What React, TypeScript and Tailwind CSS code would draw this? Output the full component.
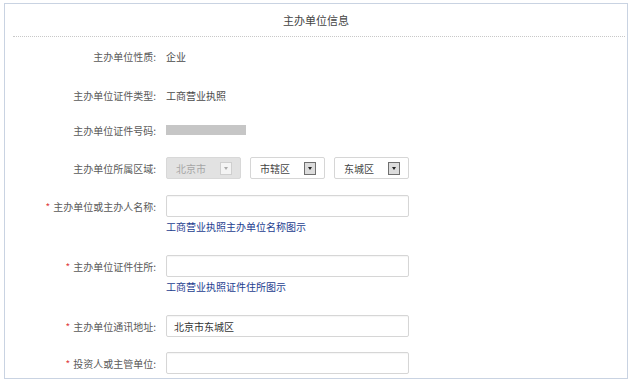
const font = { fontFamily: '"Noto Sans CJK SC", "Noto Sans", sans-serif' }

function Label({ text, required }: { text: string; required?: boolean }) {
  return (
    <div className="w-[151px] h-[22px] flex items-center justify-end shrink-0 text-[10px] text-[#5a5a5a]">
      {required && <span className="text-[#e04040] mr-[3px]">*</span>}
      <span>{text}:</span>
    </div>
  )
}

function TextInput({ value }: { value?: string }) {
  return (
    <div className="w-[243px] h-[22px] border border-[#d6d6d6] rounded-[2px] bg-white flex items-center px-[7px] text-[10px] text-[#333] shadow-[inset_0_1px_1px_rgba(0,0,0,0.04)]">
      {value}
    </div>
  )
}

function Select({ text, disabled }: { text: string; disabled?: boolean }) {
  return (
    <div
      className={`w-[75px] h-[22px] border rounded-[2px] flex items-center justify-between pl-[9px] pr-[8px] text-[10px] ${
        disabled ? 'bg-[#e2e2e2] border-[#d8d8d8] text-[#a5a5a5]' : 'bg-white border-[#d6d6d6] text-[#444]'
      }`}
    >
      <span>{text}</span>
      <span
        className={`w-[12px] h-[13px] border flex items-center justify-center ${
          disabled ? 'bg-[#f4f4f4] border-[#cfcfcf]' : 'bg-[#dcdcdc] border-[#6f6f6f]'
        }`}
      >
        <span
          className={`w-0 h-0 border-l-[2.5px] border-r-[2.5px] border-t-[3px] border-l-transparent border-r-transparent ${
            disabled ? 'border-t-[#aaa]' : 'border-t-[#222]'
          }`}
        />
      </span>
    </div>
  )
}

export default function App() {
  return (
    <div className="w-[632px] h-[383px] bg-white pt-[3px] pl-[4px]" style={font}>
      <div className="w-[624px] h-[376px] border border-[#c9d3e2] flex flex-col">
        <div className="h-[32px] flex items-center justify-center text-[11px] text-[#444]">主办单位信息</div>
        <div className="ml-[8px] mr-[2px] border-t border-dotted border-[#c8c8c8]" />

        <div className="flex items-center gap-[10px] mt-[8px]">
          <Label text="主办单位性质" />
          <span className="text-[10px] text-[#4a4a4a]">企业</span>
        </div>

        <div className="flex items-center gap-[10px] mt-[17px]">
          <Label text="主办单位证件类型" />
          <span className="text-[10px] text-[#4a4a4a]">工商营业执照</span>
        </div>

        <div className="flex items-center gap-[10px] mt-[13px]">
          <Label text="主办单位证件号码" />
          <div className="w-[80px] h-[10px] bg-[#c6c6c6] blur-[0.5px]" />
        </div>

        <div className="flex items-center gap-[10px] mt-[16px]">
          <Label text="主办单位所属区域" />
          <div className="flex gap-[9px]">
            <Select text="北京市" disabled />
            <Select text="市辖区" />
            <Select text="东城区" />
          </div>
        </div>

        <div className="flex items-start gap-[10px] mt-[16px]">
          <Label text="主办单位或主办人名称" required />
          <div className="flex flex-col">
            <TextInput />
            <span className="mt-[3px] h-[14px] leading-[14px] text-[10px] text-[#1d3d8f]">工商营业执照主办单位名称图示</span>
          </div>
        </div>

        <div className="flex items-start gap-[10px] mt-[21px]">
          <Label text="主办单位证件住所" required />
          <div className="flex flex-col">
            <TextInput />
            <span className="mt-[3px] h-[14px] leading-[14px] text-[10px] text-[#1d3d8f]">工商营业执照证件住所图示</span>
          </div>
        </div>

        <div className="flex items-center gap-[10px] mt-[21px]">
          <Label text="主办单位通讯地址" required />
          <TextInput value="北京市东城区" />
        </div>

        <div className="flex items-center gap-[10px] mt-[15px]">
          <Label text="投资人或主管单位" required />
          <TextInput />
        </div>
      </div>
    </div>
  )
}
